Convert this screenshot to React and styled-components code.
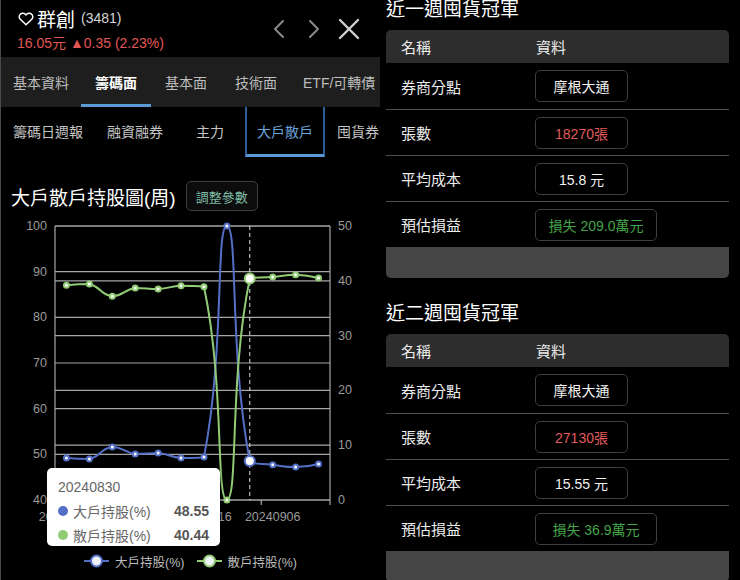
import React from "react";
import styled, { createGlobalStyle } from "styled-components";

const sans = `"Liberation Sans", "Noto Sans CJK TC", sans-serif`;

const GlobalStyle = createGlobalStyle`
  *, *::before, *::after { box-sizing: border-box; }
  html, body { margin: 0; padding: 0; background: #000; }
  body { font-family: ${sans}; color: #fff; }
`;

const dates = [
  "20240705", "20240712", "20240719", "20240726", "20240802", "20240809",
  "20240816", "20240823", "20240830", "20240906", "20240913", "20240920",
];
const bigHolders = [49.2, 49.0, 51.6, 50.1, 50.3, 49.2, 49.4, 100, 48.55, 47.7, 47.2, 47.9];
const retail = [39.2, 39.4, 37.2, 38.7, 38.5, 39.1, 38.9, 0, 40.44, 40.7, 41.1, 40.5];

const BLUE = "#5470c6";
const GREEN = "#91cc75";

const tabs = ["基本資料", "籌碼面", "基本面", "技術面", "ETF/可轉債"];
const subTabs = ["籌碼日週報", "融資融券", "主力", "大戶散戶", "囤貨券商"];

const sections = [
  { title: "近一週囤貨冠軍", lots: "18270張", cost: "15.8 元", pnl: "損失 209.0萬元" },
  { title: "近二週囤貨冠軍", lots: "27130張", cost: "15.55 元", pnl: "損失 36.9萬元" },
];

// chart geometry (svg coords)
const L = 54, R = 329, T = 10, B = 284;
const step = (R - L) / dates.length;
const px = (i) => L + step * (i + 0.5);
const yLeft = (v) => B - ((v - 40) / 60) * (B - T);
const yRight = (v) => B - (v / 50) * (B - T);

const clamp = (v, a, b) => Math.min(Math.max(v, Math.min(a, b)), Math.max(a, b));

// echarts-like smoothing
function smoothPath(pts, smooth = 0.5) {
  const n = pts.length;
  const cps = pts.map((p, i) => {
    if (i === 0 || i === n - 1) return { prev: p, next: p };
    const a = pts[i - 1], c = pts[i + 1];
    const vx = c[0] - a[0], vy = c[1] - a[1];
    const d0 = Math.hypot(p[0] - a[0], p[1] - a[1]);
    const d1 = Math.hypot(c[0] - p[0], c[1] - p[1]);
    const r = d1 / (d0 + d1 || 1);
    const next = [
      clamp(p[0] + vx * smooth * r, p[0], c[0]),
      clamp(p[1] + vy * smooth * r, p[1], c[1]),
    ];
    const prev = [
      clamp(p[0] - vx * smooth * (1 - r), a[0], p[0]),
      clamp(p[1] - vy * smooth * (1 - r), a[1], p[1]),
    ];
    return { prev, next };
  });
  let d = `M${pts[0][0]},${pts[0][1]}`;
  for (let i = 1; i < n; i++) {
    const c1 = cps[i - 1].next, c2 = cps[i].prev, p = pts[i];
    d += ` C${c1[0]},${c1[1]} ${c2[0]},${c2[1]} ${p[0]},${p[1]}`;
  }
  return d;
}

const Page = styled.div`
  display: flex;
  width: 740px;
  height: 580px;
  overflow: hidden;
  background: #000;
`;

const LeftPanel = styled.div`
  width: 380px;
  flex: 0 0 380px;
  border-left: 1px solid #4a4a4a;
  overflow: hidden;
`;

const Header = styled.div`
  height: 57px;
  display: flex;
  justify-content: space-between;
  align-items: flex-start;
  padding: 7px 20px 0 17px;
`;

const NameLine = styled.div`
  display: flex;
  align-items: center;
  height: 22px;
  gap: 3px;
`;

const StockName = styled.span`
  font-size: 19px;
  color: #fff;
`;

const StockCode = styled.span`
  font-size: 14px;
  color: #d6d6d6;
  margin-left: 3px;
`;

const Price = styled.div`
  margin-top: 3px;
  line-height: 22px;
  font-size: 14px;
  color: #e25656;
  margin-left: -1px;
`;

const Nav = styled.div`
  display: flex;
  align-items: center;
  gap: 21px;
  margin-top: 11px;
`;

const TabBar = styled.div`
  display: flex;
  height: 50px;
  background: #1e1e1e;
  white-space: nowrap;
`;

const Tab = styled.div`
  flex: 0 0 auto;
  min-width: 70px;
  padding: 3px 12px 0;
  display: flex;
  align-items: center;
  justify-content: center;
  font-size: 14px;
  color: ${(p) => (p.$active ? "#fff" : "#bdbdbd")};
  font-weight: ${(p) => (p.$active ? 700 : 400)};
  border-bottom: 3px solid ${(p) => (p.$active ? "#5b9bd5" : "transparent")};
`;

const SubBar = styled.div`
  display: flex;
  height: 50px;
  white-space: nowrap;
`;

const SubTab = styled(Tab)`
  font-weight: 400;
  color: ${(p) => (p.$active ? "#6aa3dc" : "#c4c4c4")};
  border-left: 2px solid ${(p) => (p.$active ? "#2b5f99" : "transparent")};
  border-right: 2px solid ${(p) => (p.$active ? "#2b5f99" : "transparent")};
  border-bottom: 3px solid ${(p) => (p.$active ? "#5b9bd5" : "transparent")};
  padding: 0 10px;
`;

const TitleRow = styled.div`
  display: flex;
  align-items: center;
  gap: 10px;
  margin-top: 24px;
  height: 30px;
  padding-left: 10px;
`;

const ChartTitle = styled.h1`
  margin: 0;
  font-size: 19px;
  font-weight: 400;
  color: #fff;
`;

const ParamButton = styled.button`
  height: 30px;
  padding: 0 9px;
  background: #0c0c0c;
  border: 1px solid #3e3e3e;
  border-radius: 5px;
  color: #7dbaa4;
  font-family: ${sans};
  font-size: 13px;
`;

const ChartArea = styled.div`
  position: relative;
  margin-top: 5px;
`;

const Tooltip = styled.div`
  position: absolute;
  left: 46px;
  top: 252px;
  width: 173px;
  height: 78px;
  padding: 7px 11px 0;
  background: #fff;
  border-radius: 5px;
  box-shadow: 0 1px 6px rgba(0, 0, 0, 0.3);
  color: #666;
  font-size: 14px;
`;

const TipLine = styled.div`
  display: flex;
  align-items: center;
  height: 24px;
`;

const Dot = styled.span`
  width: 10px;
  height: 10px;
  border-radius: 50%;
  background: ${(p) => p.$color};
  margin-right: 5px;
`;

const TipValue = styled.span`
  margin-left: auto;
  font-weight: 700;
  color: #555;
`;

const Legend = styled.div`
  display: flex;
  justify-content: center;
  align-items: center;
  gap: 12px;
  margin-top: 16px;
  height: 22px;
`;

const LegendItem = styled.div`
  display: flex;
  align-items: center;
  gap: 6px;
  font-size: 12.5px;
  color: #bdbdbd;
`;

const RightPanel = styled.div`
  flex: 1;
  padding: 0 11px 0 6px;
  margin-top: -4px;
`;

const Section = styled.section`
  & + & {
    margin-top: 22px;
  }
`;

const SectionTitle = styled.h2`
  margin: 0 0 6px;
  font-size: 19px;
  line-height: 28px;
  font-weight: 400;
  color: #fff;
`;

const Table = styled.div`
  border-radius: 5px;
  overflow: hidden;
`;

const HeadRow = styled.div`
  display: grid;
  grid-template-columns: 135px 1fr;
  align-items: center;
  height: 33px;
  padding-left: 15px;
  background: #2d2d2d;
  font-size: 15px;
  color: #ededed;
`;

const Row = styled(HeadRow)`
  height: 46px;
  background: #000;
  & + & {
    border-top: 1px solid #4d4d4d;
  }
`;

const ValueBox = styled.div`
  width: ${(p) => (p.$wide ? 122 : 93)}px;
  height: 32px;
  margin-left: -1px;
  border: 1px solid #3f3f3f;
  border-radius: 5px;
  display: flex;
  align-items: center;
  justify-content: center;
  font-size: 14px;
  color: ${(p) => p.$color || "#f2f2f2"};
`;

const Footer = styled.div`
  height: 31px;
  background: #454545;
`;

function Heart() {
  return (
    <svg width="16" height="15" viewBox="0 0 24 22">
      <path
        d="M12 20.5 3.4 12.2A5.3 5.3 0 0 1 11 4.6l1 1 1-1a5.3 5.3 0 0 1 7.6 7.6Z"
        fill="none"
        stroke="#fff"
        strokeWidth="2.2"
        strokeLinejoin="round"
      />
    </svg>
  );
}

function Chevron({ dir }) {
  const d = dir === "left" ? "M11 2 3 10l8 8" : "M3 2l8 8-8 8";
  return (
    <svg width="14" height="20" viewBox="0 0 14 20">
      <path d={d} fill="none" stroke="#8a8a8a" strokeWidth="2" strokeLinecap="round" strokeLinejoin="round" />
    </svg>
  );
}

function Close() {
  return (
    <svg width="22" height="22" viewBox="0 0 22 22" style={{ marginLeft: -4 }}>
      <path d="M2 2l18 18M20 2 2 20" stroke="#cfcfcf" strokeWidth="2.4" strokeLinecap="round" />
    </svg>
  );
}

function LegendIcon({ color }) {
  return (
    <svg width="25" height="14" viewBox="0 0 25 14">
      <line x1="0" y1="7" x2="25" y2="7" stroke={color} strokeWidth="2" />
      <circle cx="12.5" cy="7" r="5.5" fill="#eef1f6" stroke={color} strokeWidth="2" />
    </svg>
  );
}

function HoldingChart() {
  const bluePts = bigHolders.map((v, i) => [px(i), yLeft(v)]);
  const greenPts = retail.map((v, i) => [px(i), yRight(v)]);
  const leftTicks = [40, 50, 60, 70, 80, 90, 100];
  const rightTicks = [0, 10, 20, 30, 40, 50];
  const hover = 8;
  return (
    <svg width="380" height="314" viewBox="0 0 380 314" fontFamily={sans}>
      {leftTicks.map((v) => (
        <g key={"l" + v}>
          <line x1={L} x2={R} y1={yLeft(v)} y2={yLeft(v)} stroke="#a6a6a6" strokeWidth="1.2" />
          <text x="46" y={yLeft(v) + 4} textAnchor="end" fontSize="12.5" fill="#9a9a9a">{v}</text>
        </g>
      ))}
      {rightTicks.map((v) => (
        <g key={"r" + v}>
          <line x1={L} x2={R} y1={yRight(v)} y2={yRight(v)} stroke="#a6a6a6" strokeWidth="1.2" />
          <text x="337" y={yRight(v) + 4} fontSize="12.5" fill="#9a9a9a">{v}</text>
        </g>
      ))}
      <line x1={L} x2={L} y1={T} y2={B} stroke="#a6a6a6" strokeWidth="1.2" />
      <line x1={R} x2={R} y1={T} y2={B} stroke="#a6a6a6" strokeWidth="1.2" />
      {[0, 3, 6, 9, 12].map((k) => (
        <line key={k} x1={L + step * k} x2={L + step * k} y1={B} y2={B + 5} stroke="#a6a6a6" strokeWidth="1.2" />
      ))}
      {[0, 3, 6, 9].map((i) => (
        <text key={i} x={px(i)} y={B + 21} textAnchor="middle" fontSize="12.5" fill="#9a9a9a">{dates[i]}</text>
      ))}
      <line x1={px(hover)} x2={px(hover)} y1={T} y2={B} stroke="#e0e0e0" strokeWidth="1" strokeDasharray="4 3" />
      <path d={smoothPath(bluePts)} fill="none" stroke={BLUE} strokeWidth="2" />
      <path d={smoothPath(greenPts)} fill="none" stroke={GREEN} strokeWidth="2" />
      {bluePts.map((p, i) => (
        <circle key={"b" + i} cx={p[0]} cy={p[1]} r={i === hover ? 5 : 2.5} fill="#fff" stroke={BLUE} strokeWidth="2" />
      ))}
      {greenPts.map((p, i) => (
        <circle key={"g" + i} cx={p[0]} cy={p[1]} r={i === hover ? 5 : 2.5} fill="#fff" stroke={GREEN} strokeWidth="2" />
      ))}
    </svg>
  );
}

function WinnerTable({ lots, cost, pnl }) {
  return (
    <Table>
      <HeadRow>
        <span>名稱</span>
        <span>資料</span>
      </HeadRow>
      <Row>
        <span>券商分點</span>
        <ValueBox>摩根大通</ValueBox>
      </Row>
      <Row>
        <span>張數</span>
        <ValueBox $color="#e05a5c">{lots}</ValueBox>
      </Row>
      <Row>
        <span>平均成本</span>
        <ValueBox>{cost}</ValueBox>
      </Row>
      <Row>
        <span>預估損益</span>
        <ValueBox $wide $color="#45a349">{pnl}</ValueBox>
      </Row>
      <Footer />
    </Table>
  );
}

export default function App() {
  return (
    <>
      <GlobalStyle />
      <Page>
        <LeftPanel>
          <Header>
            <div>
              <NameLine>
                <Heart />
                <StockName>群創</StockName>
                <StockCode>(3481)</StockCode>
              </NameLine>
              <Price>16.05元 ▲0.35 (2.23%)</Price>
            </div>
            <Nav>
              <Chevron dir="left" />
              <Chevron dir="right" />
              <Close />
            </Nav>
          </Header>
          <TabBar>
            {tabs.map((t) => (
              <Tab key={t} $active={t === "籌碼面"}>{t}</Tab>
            ))}
          </TabBar>
          <SubBar>
            {subTabs.map((t) => (
              <SubTab key={t} $active={t === "大戶散戶"}>{t}</SubTab>
            ))}
          </SubBar>
          <TitleRow>
            <ChartTitle>大戶散戶持股圖(周)</ChartTitle>
            <ParamButton>調整參數</ParamButton>
          </TitleRow>
          <ChartArea>
            <HoldingChart />
            <Tooltip>
              <TipLine>20240830</TipLine>
              <TipLine>
                <Dot $color={BLUE} />
                大戶持股(%)
                <TipValue>48.55</TipValue>
              </TipLine>
              <TipLine>
                <Dot $color={GREEN} />
                散戶持股(%)
                <TipValue>40.44</TipValue>
              </TipLine>
            </Tooltip>
            <Legend>
              <LegendItem>
                <LegendIcon color={BLUE} />
                大戶持股(%)
              </LegendItem>
              <LegendItem>
                <LegendIcon color={GREEN} />
                散戶持股(%)
              </LegendItem>
            </Legend>
          </ChartArea>
        </LeftPanel>
        <RightPanel>
          {sections.map((s) => (
            <Section key={s.title}>
              <SectionTitle>{s.title}</SectionTitle>
              <WinnerTable {...s} />
            </Section>
          ))}
        </RightPanel>
      </Page>
    </>
  );
}
